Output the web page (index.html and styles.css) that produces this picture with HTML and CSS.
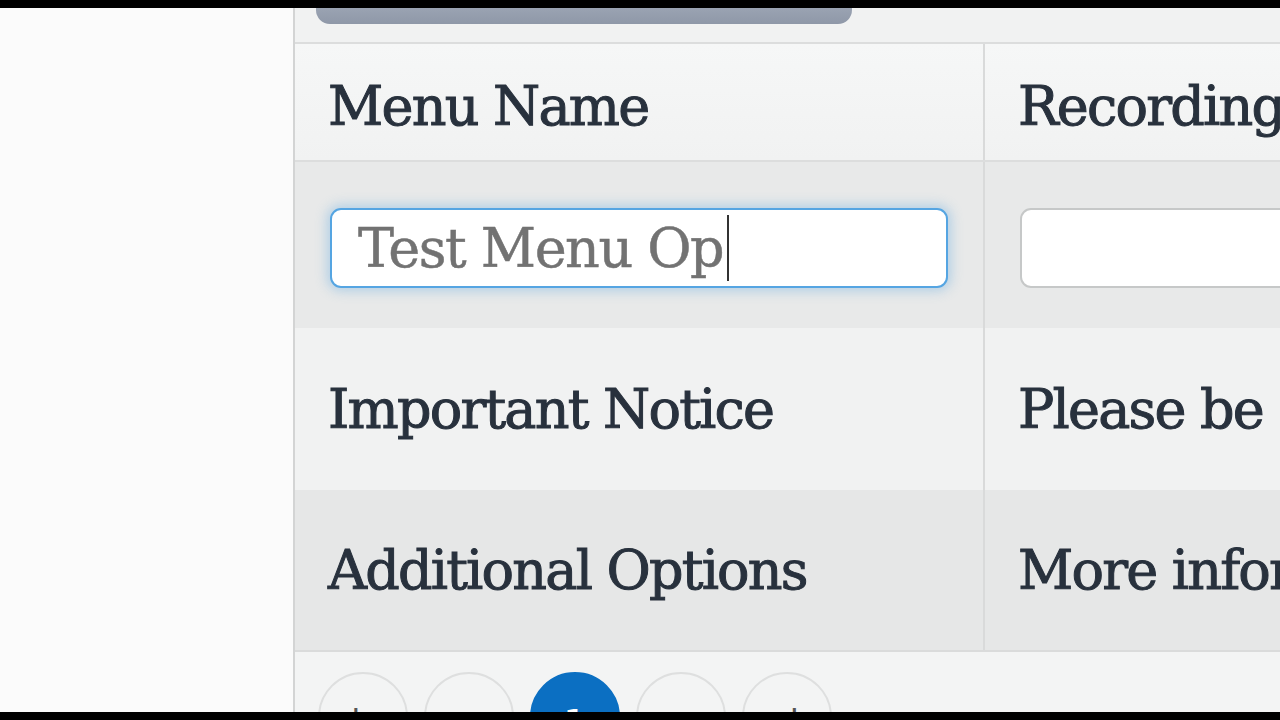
FILE: index.html
```html
<!DOCTYPE html>
<html lang="en">
<head>
<meta charset="utf-8">
<title>Menu Options</title>
<link rel="stylesheet" href="styles.css">
</head>
<body>
<div class="letterbox"></div>
<div class="screen">
  <aside class="side"></aside>
  <main class="panel">
    <div class="topstrip"><div class="tabbar"></div></div>
    <div class="table">
      <div class="row head">
        <div class="cell first">Menu Name</div>
        <div class="cell">Recording</div>
      </div>
      <div class="row edit">
        <div class="cell first">
          <div class="field focus"><span class="val">Test Menu Op</span><span class="caret"></span></div>
        </div>
        <div class="cell">
          <div class="field"></div>
        </div>
      </div>
      <div class="row light">
        <div class="cell first">Important Notice</div>
        <div class="cell">Please be advised</div>
      </div>
      <div class="row dark">
        <div class="cell first">Additional Options</div>
        <div class="cell">More information</div>
      </div>
      <div class="pager">
        <span class="pg">|‹</span>
        <span class="pg">‹</span>
        <span class="pg on">1</span>
        <span class="pg">›</span>
        <span class="pg">›|</span>
      </div>
    </div>
  </main>
</div>
<div class="letterbox"></div>
</body>
</html>
```
FILE: styles.css
```css
html, body {
  margin: 0;
  padding: 0;
  width: 1280px;
  height: 720px;
  overflow: hidden;
  background: #000;
}
body {
  display: flex;
  flex-direction: column;
  font-family: "DejaVu Serif", "Liberation Serif", serif;
}
.letterbox {
  height: 8px;
  background: #000;
  flex: none;
}
.screen {
  flex: 1;
  display: flex;
  overflow: hidden;
}
.side {
  width: 293px;
  flex: none;
  background: #fbfbfb;
}
.panel {
  flex: 1;
  border-left: 2px solid #d3d4d4;
  background: #f1f2f2;
  overflow: hidden;
  display: flex;
  flex-direction: column;
}
.topstrip {
  height: 34px;
  flex: none;
  padding-left: 21px;
}
.tabbar {
  width: 536px;
  height: 16px;
  background: linear-gradient(#9aa3b2, #8f98a8);
  border-radius: 0 0 14px 14px;
}
.table {
  border-top: 2px solid #dcdddd;
  flex: 1;
  display: flex;
  flex-direction: column;
}
.row {
  display: grid;
  grid-template-columns: 690px 1fr;
  flex: none;
}
.cell {
  display: flex;
  align-items: center;
  padding-left: 33px;
  font-size: 54px;
  letter-spacing: -1.8px;
  color: #28313d;
  white-space: nowrap;
  overflow: hidden;
  -webkit-text-stroke: 1px #28313d;
}
.cell.first {
  border-right: 2px solid #d9dada;
}
.head {
  height: 116px;
  background: linear-gradient(#f6f7f7, #f1f2f2);
  border-bottom: 2px solid #dcdddd;
}
.head .cell { padding-top: 8px; }
.edit {
  height: 166px;
  background: #e8e9e9;
}
.edit .cell {
  padding-left: 35px;
  padding-top: 6px;
}
.light {
  height: 162px;
  background: #f1f2f2;
}
.dark {
  height: 160px;
  background: #e6e7e7;
  border-bottom: 2px solid #dadbdb;
}
.light .cell { padding-top: 0; }
.dark .cell { padding-top: 0; }
.field {
  box-sizing: border-box;
  height: 80px;
  width: 618px;
  background: #fff;
  border: 2px solid #c6c8c8;
  border-radius: 11px;
  display: flex;
  align-items: center;
  padding-left: 26px;
  flex: none;
  -webkit-text-stroke: 0;
}
.cell + .cell .field { width: 400px; }
.field.focus {
  border-color: #55a5e2;
  box-shadow: 0 0 12px 3px rgba(110, 175, 225, 0.45);
}
.val {
  color: #727272;
  -webkit-text-stroke: 0.5px #727272;
  letter-spacing: -1.5px;
}
.caret {
  width: 2px;
  height: 66px;
  background: #333;
  margin-left: 4px;
}
.pager {
  flex: 1;
  background: #f3f4f4;
  display: flex;
  gap: 16px;
  padding: 20px 0 0 23px;
}
.pg {
  box-sizing: border-box;
  width: 90px;
  height: 90px;
  flex: none;
  border-radius: 50%;
  border: 2px solid #dedfdf;
  display: flex;
  align-items: center;
  justify-content: center;
  font-family: "DejaVu Sans", sans-serif;
  font-size: 36px;
  color: #555;
  padding-top: 10px;
}
.pg.on {
  background: #0b6fc2;
  border-color: #0b6fc2;
  color: #fff;
}
```
